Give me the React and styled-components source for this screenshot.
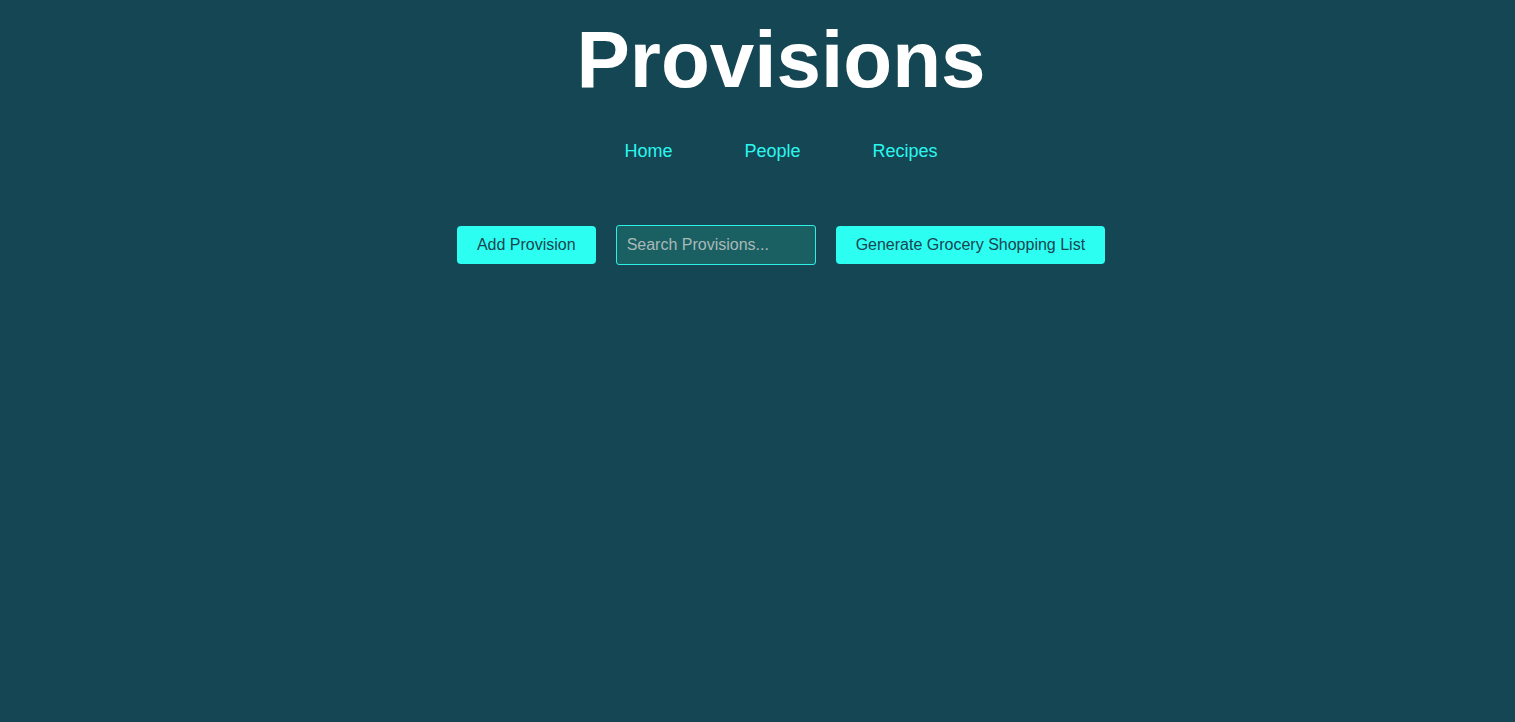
import styled, { createGlobalStyle } from 'styled-components';

const GlobalStyle = createGlobalStyle`
  html, body {
    margin: 0;
    padding: 0;
    background: #154654;
    font-family: "Liberation Sans", Arial, sans-serif;
  }
`

const Page = styled.div`
  min-height: 100vh;
  padding-left: 47px;
  display: flex;
  flex-direction: column;
  align-items: center;
`

const Title = styled.h1`
  margin: 0;
  padding-top: 14px;
  font-size: 80px;
  font-weight: 700;
  color: #ffffff;
  line-height: 92px;
`

const Nav = styled.nav`
  display: flex;
  gap: 72px;
  margin-top: 35px;
`

const NavLink = styled.a`
  color: #2af8ef;
  font-size: 18px;
  text-decoration: none;
  cursor: pointer;
`

const Toolbar = styled.div`
  display: flex;
  align-items: center;
  gap: 20px;
  margin-top: 63px;
`

const Button = styled.button`
  background: #2cfff1;
  color: #1b4450;
  border: none;
  border-radius: 4px;
  padding: 10px 20px;
  font-family: "Liberation Sans", Arial, sans-serif;
  font-size: 16px;
  line-height: 18px;
  cursor: pointer;
`

const Search = styled.input`
  width: 200px;
  height: 40px;
  box-sizing: border-box;
  background: #1a6062;
  border: 1px solid #2cf0e6;
  border-radius: 3px;
  padding: 0 10px;
  color: #ddd;
  font-family: "Liberation Sans", Arial, sans-serif;
  font-size: 16px;
  outline: none;

  &::placeholder {
    color: #a9b9b9;
  }
`

const App = () => {
  return (
    <Page>
      <GlobalStyle />
      <Title>Provisions</Title>
      <Nav>
        <NavLink>Home</NavLink>
        <NavLink>People</NavLink>
        <NavLink>Recipes</NavLink>
      </Nav>
      <Toolbar>
        <Button>Add Provision</Button>
        <Search placeholder="Search Provisions..." />
        <Button>Generate Grocery Shopping List</Button>
      </Toolbar>
    </Page>
  )
}

export default App
